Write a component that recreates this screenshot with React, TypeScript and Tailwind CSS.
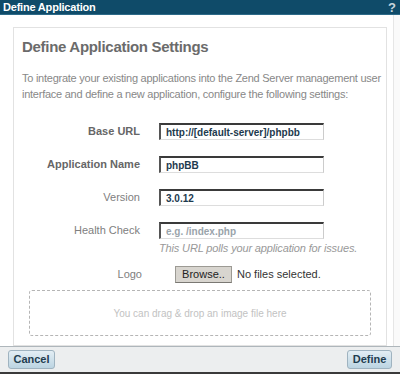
const inputBase =
  'w-[165px] h-[17px] border-t-2 border-l-2 border-r border-b border-t-[#3a3a3a] border-l-[#555] border-r-[#ccc] border-b-[#ddd] bg-white px-[5px] text-[10px] font-bold leading-[13px] flex items-center';

interface IRow {
  label: string;
  strong?: boolean;
  children: React.ReactNode;
}

const Row: React.FC<IRow> = ({ label, strong, children }) => (
  <div className="flex items-start">
    <div
      className={`w-[118px] text-right text-[11px] leading-[17px] ${
        strong ? 'font-bold text-[#666]' : 'text-[#808080]'
      }`}
    >
      {label}
    </div>
    <div className="ml-[19px]">{children}</div>
  </div>
);

const App: React.FC = () => {
  return (
    <div
      className="w-[400px] h-[374px] flex flex-col bg-white overflow-hidden"
      style={{ fontFamily: '"Liberation Sans", Arial, sans-serif' }}
    >
      <div className="h-[15px] bg-[#0f4b69] border-b border-[#2d6a88] flex items-center justify-between px-[3px]">
        <span className="text-white text-[11px] font-bold leading-none tracking-[-0.2px]">
          Define Application
        </span>
        <span className="text-[#c8d6de] text-[13px] font-bold leading-none mr-[1px]">?</span>
      </div>

      <div className="flex-1 flex min-h-0">
        <div className="flex-1 pl-[13px] pr-[6px] pt-[12px] overflow-hidden">
          <div className="border border-[#e2e2e2] h-full pl-[8px] pr-[2px] pt-[9px]">
            <h1 className="text-[15px] font-bold text-[#6b6b6b] leading-[20px] tracking-[-0.3px]">
              Define Application Settings
            </h1>
            <p className="mt-[13px] text-[11px] leading-[16px] text-[#888] tracking-[-0.25px]">
              To integrate your existing applications into the Zend Server management user interface
              and define a new application, configure the following settings:
            </p>

            <div className="mt-[21px] flex flex-col gap-[16px]">
              <Row label="Base URL" strong>
                <div className={`${inputBase} text-[#1d3a4e]`}>http://[default-server]/phpbb</div>
              </Row>
              <Row label="Application Name" strong>
                <div className={`${inputBase} text-[#1d3a4e]`}>phpBB</div>
              </Row>
              <Row label="Version">
                <div className={`${inputBase} text-[#1d3a4e]`}>3.0.12</div>
              </Row>
              <Row label="Health Check">
                <div className={`${inputBase} text-[#9aa4ab]`}>e.g. /index.php</div>
                <div className="mt-[2px] text-[11px] italic text-[#999] leading-[15px] tracking-[-0.15px]">
                  This URL polls your application for issues.
                </div>
              </Row>
            </div>

            <div className="mt-[10px] flex items-center">
              <div className="w-[120px] text-right text-[11px] text-[#808080]">Logo</div>
              <div className="ml-[33px] h-[17px] w-[57px] bg-[#d8d5cf] border border-[#9c9a94] border-b-[#7a7873] text-[11px] text-[#222] flex items-center justify-center leading-none">
                Browse..
              </div>
              <span className="ml-[5px] text-[11px] text-[#333]">No files selected.</span>
            </div>

            <div className="mt-[7px] ml-[7px] mr-[13px] h-[46px] border border-dashed border-[#b5b5b5] rounded-[3px] flex items-center justify-center text-[10px] text-[#c2c2c2]">
              You can drag &amp; drop an image file here
            </div>
          </div>
        </div>
        <div className="w-[7px] border-l border-[#e6e6e6] bg-[#fafafa]" />
      </div>

      <div className="h-[28px] bg-[#eceeef] border-t border-[#aeb6bb] border-b-2 border-b-[#3a3a3a] flex items-center justify-between px-[8px]">
        <button className="h-[19px] w-[47px] rounded-[3px] border border-[#9fb3c0] bg-gradient-to-b from-[#e3eef4] to-[#bcd4e2] text-[11px] font-bold text-[#1f3d50] leading-none">
          Cancel
        </button>
        <button className="h-[19px] w-[45px] rounded-[3px] border border-[#9fb3c0] bg-gradient-to-b from-[#e3eef4] to-[#bcd4e2] text-[11px] font-bold text-[#1f3d50] leading-none">
          Define
        </button>
      </div>
    </div>
  );
};

export default App;
